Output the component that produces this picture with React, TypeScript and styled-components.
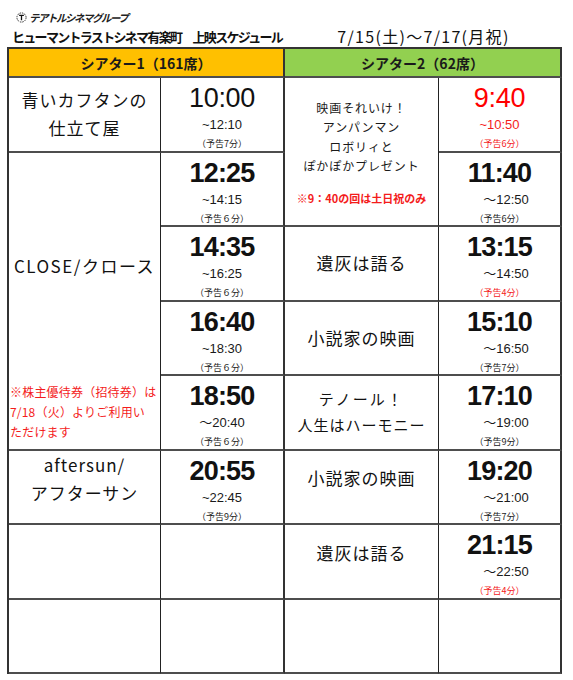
import styled, { createGlobalStyle } from "styled-components";

const GlobalStyle = createGlobalStyle`
  html, body {
    margin: 0;
    padding: 0;
    background: #fff;
  }
  body {
    font-family: "Noto Sans CJK JP", sans-serif;
    color: #111;
  }
`;

type Show = {
  start: string;
  end: string;
  trailer: string;
  bold?: boolean;
  red?: boolean;
  redTrailer?: boolean;
};

const RED = "#f41c1c";

const TimeBlock = ({ show, divider, edge }: { show: Show; divider?: boolean; edge?: boolean }) => (
  <TimeCell $divider={divider} $edge={edge}>
    <StartTime $bold={show.bold !== false} $red={!!show.red}>
      {show.start}
    </StartTime>
    <EndTime $red={!!show.red}>{show.end}</EndTime>
    <Trailer $red={!!show.red || !!show.redTrailer}>{show.trailer}</Trailer>
  </TimeCell>
);

const App = () => {
  return (
    <Wrapper>
      <GlobalStyle />
      <LogoRow>
        <svg width="11" height="11" viewBox="0 0 12 12">
          <circle cx="6" cy="6" r="5" fill="none" stroke="#222" strokeWidth="1" strokeDasharray="1.6 1" />
          <path d="M3.4 3.6 H8.6 M6 3.6 V9" stroke="#111" strokeWidth="1.4" />
        </svg>
        <LogoText>テアトルシネマグループ</LogoText>
      </LogoRow>
      <TitleRow>
        <Title>ヒューマントラストシネマ有楽町　上映スケジュール</Title>
        <DateText>7/15(土)～7/17(月祝)</DateText>
      </TitleRow>

      <Sheet>
        <HeaderCell $bg="#ffc000" $divider>
          シアター1（161席）
        </HeaderCell>
        <HeaderCell $bg="#92d050" $edge>
          シアター2（62席）
        </HeaderCell>

        {/* row 1 */}
        <MovieCell>
          青いカフタンの
          <br />
          仕立て屋
        </MovieCell>
        <TimeBlock show={{ start: "10:00", end: "~12:10", trailer: "（予告7分）", bold: false }} divider />
        <AnpanCell $rows={2}>
          <AnpanTitle>
            映画それいけ！
            <br />
            アンパンマン
            <br />
            ロボリィと
            <br />
            ぽかぽかプレゼント
          </AnpanTitle>
          <AnpanNote>※9：40の回は土日祝のみ</AnpanNote>
        </AnpanCell>
        <TimeBlock show={{ start: "9:40", end: "~10:50", trailer: "（予告6分）", bold: false, red: true }} edge />

        {/* row 2 */}
        <CloseCell $rows={4}>
          <CloseTitle>CLOSE/クロース</CloseTitle>
          <RedNote>
            ※株主優待券（招待券）は
            <br />
            7/18（火）よりご利用い
            <br />
            ただけます
          </RedNote>
        </CloseCell>
        <TimeBlock show={{ start: "12:25", end: "~14:15", trailer: "（予告６分）" }} divider />
        <TimeBlock show={{ start: "11:40", end: "\u3000～12:50", trailer: "（予告6分）" }} edge />

        {/* row 3 */}
        <TimeBlock show={{ start: "14:35", end: "~16:25", trailer: "（予告６分）" }} divider />
        <MovieCell>遺灰は語る</MovieCell>
        <TimeBlock show={{ start: "13:15", end: "\u3000～14:50", trailer: "（予告4分）", redTrailer: true }} edge />

        {/* row 4 */}
        <TimeBlock show={{ start: "16:40", end: "~18:30", trailer: "（予告６分）" }} divider />
        <MovieCell>小説家の映画</MovieCell>
        <TimeBlock show={{ start: "15:10", end: "\u3000～16:50", trailer: "（予告7分）" }} edge />

        {/* row 5 */}
        <TimeBlock show={{ start: "18:50", end: "～20:40", trailer: "（予告６分）" }} divider />
        <MovieCell $size={15} $lineHeight={26}>
          <Spaced>テノール！</Spaced>
          人生はハーモニー
        </MovieCell>
        <TimeBlock show={{ start: "17:10", end: "\u3000～19:00", trailer: "（予告9分）" }} edge />

        {/* row 6 */}
        <MovieCell $top>
          aftersun/
          <br />
          アフターサン
        </MovieCell>
        <TimeBlock show={{ start: "20:55", end: "~22:45", trailer: "（予告9分）" }} divider />
        <MovieCell $lift={18}>小説家の映画</MovieCell>
        <TimeBlock show={{ start: "19:20", end: "\u3000～21:00", trailer: "（予告7分）" }} edge />

        {/* row 7 */}
        <EmptyCell />
        <EmptyCell $divider />
        <MovieCell $lift={16}>遺灰は語る</MovieCell>
        <TimeBlock show={{ start: "21:15", end: "\u3000～22:50", trailer: "（予告4分）", redTrailer: true }} edge />

        {/* row 8 */}
        <EmptyCell />
        <EmptyCell $divider />
        <EmptyCell />
        <EmptyCell $edge />
      </Sheet>
    </Wrapper>
  );
};

/* STYLE */
const Wrapper = styled.div`
  width: 573px;
  height: 680px;
  padding: 10px 11px 0 7px;
  box-sizing: border-box;
  overflow: hidden;
`;

const LogoRow = styled.div`
  display: flex;
  align-items: center;
  gap: 2px;
  height: 14px;
  padding-left: 9px;
`;

const LogoText = styled.span`
  font-size: 10.5px;
  font-weight: bold;
  font-style: italic;
  letter-spacing: -1.5px;
  color: #222;
`;

const TitleRow = styled.div`
  display: grid;
  grid-template-columns: 278px 277px;
  align-items: center;
  height: 23px;
`;

const Title = styled.div`
  padding-left: 5px;
  font-size: 13px;
  font-weight: bold;
  letter-spacing: -1.7px;
  white-space: nowrap;
  color: #111;
`;

const DateText = styled.div`
  text-align: center;
  font-size: 16px;
  letter-spacing: 1.3px;
  color: #111;
  white-space: nowrap;
`;

const Sheet = styled.div`
  display: grid;
  grid-template-columns: 152px 124px 154px 123px;
  grid-template-rows: 29px repeat(8, 74.5px);
  width: 555px;
  box-sizing: border-box;
  border-top: 2px solid #333;
  border-left: 2px solid #333;
`;

const Cell = styled.div<{ $divider?: boolean; $edge?: boolean; $rows?: number }>`
  box-sizing: border-box;
  border-bottom: 2px solid #4e4e4e;
  border-right: ${({ $divider, $edge }) => ($divider || $edge ? "2px solid #333" : "1px solid #222")};
  grid-row: span ${({ $rows }) => $rows ?? 1};
  min-width: 0;
`;

const HeaderCell = styled(Cell)<{ $bg: string }>`
  grid-column: span 2;
  display: flex;
  align-items: center;
  justify-content: center;
  background: ${({ $bg }) => $bg};
  font-size: 14px;
  font-weight: bold;
  color: #1a1a1a;
`;

const EmptyCell = styled(Cell)``;

const MovieCell = styled(Cell)<{ $size?: number; $lineHeight?: number; $top?: boolean; $lift?: number }>`
  display: flex;
  flex-direction: column;
  align-items: center;
  justify-content: ${({ $top }) => ($top ? "flex-start" : "center")};
  padding-bottom: ${({ $lift }) => $lift ?? 0}px;
  text-align: center;
  font-size: ${({ $size }) => $size ?? 17}px;
  line-height: ${({ $lineHeight }) => $lineHeight ?? 28}px;
  letter-spacing: 1px;
  color: #111;
`;

const Spaced = styled.span`
  letter-spacing: 2.2px;
`;

const AnpanCell = styled(Cell)`
  display: flex;
  flex-direction: column;
  align-items: center;
  justify-content: center;
  text-align: center;
`;

const AnpanTitle = styled.div`
  font-size: 12px;
  line-height: 19.5px;
  letter-spacing: 0.9px;
  color: #1a1a1a;
`;

const AnpanNote = styled.div`
  margin-top: 14px;
  font-size: 11px;
  font-weight: bold;
  color: ${RED};
`;

const CloseCell = styled(Cell)`
  display: grid;
  grid-template-rows: 225px 1fr;
`;

const CloseTitle = styled.div`
  display: flex;
  align-items: center;
  justify-content: center;
  font-size: 17px;
  letter-spacing: 1.5px;
  color: #111;
`;

const RedNote = styled.div`
  display: flex;
  flex-direction: column;
  justify-content: center;
  padding: 0 0 2px 1px;
  font-size: 12px;
  line-height: 20px;
  letter-spacing: 0.2px;
  color: ${RED};
  white-space: nowrap;
`;

const TimeCell = styled(Cell)`
  display: flex;
  flex-direction: column;
  align-items: center;
  padding-top: 5px;
`;

const StartTime = styled.div<{ $bold: boolean; $red: boolean }>`
  font-family: "Liberation Sans", "Noto Sans CJK JP", sans-serif;
  font-size: 27px;
  line-height: 30px;
  font-weight: ${({ $bold }) => ($bold ? "bold" : "normal")};
  letter-spacing: ${({ $bold }) => ($bold ? "-0.8px" : "-0.3px")};
  color: ${({ $red }) => ($red ? "#ff0000" : "#111")};
`;

const EndTime = styled.div<{ $red: boolean }>`
  margin-top: 4px;
  font-family: "Liberation Sans", "Noto Sans CJK JP", sans-serif;
  font-size: 13px;
  line-height: 16px;
  white-space: pre;
  color: ${({ $red }) => ($red ? RED : "#1a1a1a")};
`;

const Trailer = styled.div<{ $red: boolean }>`
  margin-top: 4px;
  font-size: 9px;
  line-height: 13px;
  color: ${({ $red }) => ($red ? RED : "#222")};
`;

export default App;
